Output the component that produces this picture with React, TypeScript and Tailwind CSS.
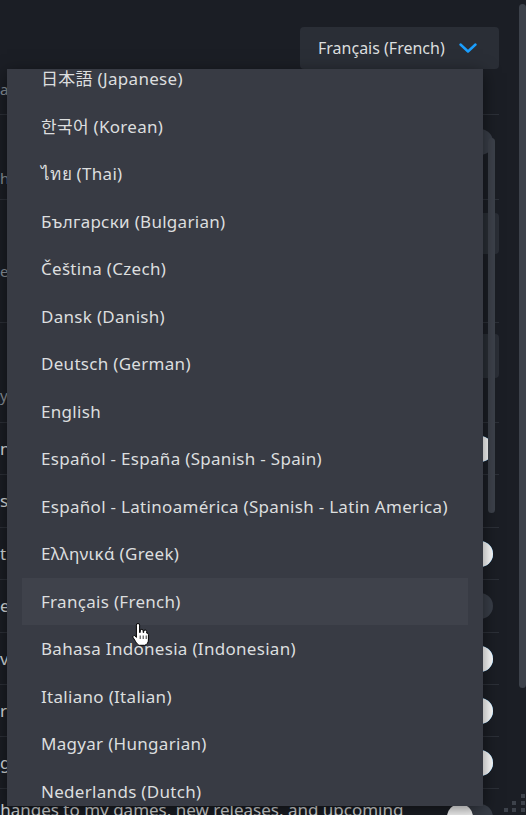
import React from "react";

const FONT = '"Noto Sans", "Noto Sans CJK JP", "Noto Sans CJK KR", "DejaVu Sans", sans-serif';

const languages = [
  "日本語 (Japanese)",
  "한국어 (Korean)",
  "ไทย (Thai)",
  "Български (Bulgarian)",
  "Čeština (Czech)",
  "Dansk (Danish)",
  "Deutsch (German)",
  "English",
  "Español - España (Spanish - Spain)",
  "Español - Latinoamérica (Spanish - Latin America)",
  "Ελληνικά (Greek)",
  "Français (French)",
  "Bahasa Indonesia (Indonesian)",
  "Italiano (Italian)",
  "Magyar (Hungarian)",
  "Nederlands (Dutch)",
];

function Toggle({ on }: { on: boolean }) {
  return (
    <div
      className={
        "relative w-[46px] h-[26px] rounded-full " + (on ? "bg-[#1a9fff]" : "bg-[#393e48]")
      }
    >
      <div
        className={
          "absolute top-0 w-[26px] h-[26px] rounded-full bg-white " + (on ? "right-0" : "left-0")
        }
      />
    </div>
  );
}

function ToggleRow({ h, label, on }: { h: string; label: string; on: boolean }) {
  return (
    <div className={"shrink-0 flex items-center justify-between border-b border-[#2c3038] pr-[6px] " + h}>
      <span className="text-[17px] text-[#dcdedf] whitespace-nowrap">{label}</span>
      <Toggle on={on} />
    </div>
  );
}

function Chevron() {
  return (
    <svg width="18" height="10" viewBox="0 0 18 10" fill="none">
      <path d="M1.5 1.5 L9 8.5 L16.5 1.5" stroke="#1a9fff" strokeWidth="2.4" strokeLinecap="round" strokeLinejoin="round" />
    </svg>
  );
}

function Cursor() {
  return (
    <svg width="18" height="25" viewBox="0 0 18 25">
      <path
        d="M6 1.5a1.6 1.6 0 0 1 1.6 1.6v7.4h0.6v-1.6a1.5 1.5 0 0 1 3 0v1.6h0.5v-1a1.5 1.5 0 0 1 3 0v1.6h0.3a1.4 1.4 0 0 1 1.4 1.4v5.5c0 2.6-1.5 4.6-3.6 5.3h-5.6c-1.5-0.6-2.6-2.1-3.5-3.6l-2.6-4.2a1.3 1.3 0 0 1 2-1.6l1.3 1.5v-12.3a1.6 1.6 0 0 1 1.6-1.6z"
        fill="white"
        stroke="black"
        strokeWidth="1"
        strokeLinejoin="round"
      />
      <path d="M8.2 13.5v3.5M11.2 13.5v3.5M14.2 13.5v3.5" stroke="black" strokeWidth="0.8" />
    </svg>
  );
}

export default function App() {
  return (
    <div
      className="relative w-[526px] h-[815px] overflow-hidden bg-[#1b1e25] flex"
      style={{ fontFamily: FONT }}
    >
      {/* settings page */}
      <div className="w-[499px] flex flex-col shrink-0">
        <div className="shrink-0 h-[115px] border-b border-[#2c3038] flex flex-col">
          <div className="flex justify-end pt-[27px]">
            <div className="w-[199px] h-[42px] rounded-[4px] bg-[#2a2e36] flex items-center justify-between pl-[18px] pr-[22px]">
              <span className="text-[16px] text-[#dcdedf] whitespace-nowrap">Français (French)</span>
              <Chevron />
            </div>
          </div>
          <span className="mt-[9px] text-[15px] text-[#8b929a] whitespace-nowrap">all text</span>
        </div>
        <div className="shrink-0 h-[85px] border-b border-[#2c3038] flex justify-between pr-[6px]">
          <div className="flex flex-col pt-[12px]">
            <span className="text-[17px] text-[#dcdedf]">&nbsp;</span>
            <span className="mt-[14px] text-[15px] text-[#8b929a] whitespace-nowrap">hide</span>
          </div>
          <div className="pt-[14px]">
            <Toggle on={false} />
          </div>
        </div>
        <div className="shrink-0 h-[123px] border-b border-[#2c3038] flex justify-between">
          <div className="flex flex-col pt-[60px]">
            <span className="text-[15px] text-[#8b929a] whitespace-nowrap">eek</span>
          </div>
          <div className="pt-[13px]">
            <div className="w-[199px] h-[41px] rounded-[4px] bg-[#2a2e36]" />
          </div>
        </div>
        <div className="shrink-0 h-[100px] border-b border-[#2c3038] flex justify-between">
          <div className="flex flex-col pt-[61px]">
            <span className="text-[15px] text-[#8b929a] whitespace-nowrap">y</span>
          </div>
          <div className="pt-[11px]">
            <div className="w-[199px] h-[44px] rounded-[4px] bg-[#2a2e36]" />
          </div>
        </div>
        <ToggleRow h="h-[52px]" label="n" on={true} />
        <div className="shrink-0 h-[53px] border-b border-[#2c3038] flex items-center">
          <span className="text-[17px] text-[#dcdedf] whitespace-nowrap">s</span>
        </div>
        <ToggleRow h="h-[52px]" label="t" on={true} />
        <ToggleRow h="h-[53px]" label="e" on={false} />
        <ToggleRow h="h-[52px]" label="v" on={true} />
        <ToggleRow h="h-[52px]" label="r" on={true} />
        <ToggleRow h="h-[52px]" label="g" on={true} />
        <div className="shrink-0 flex justify-between items-start pt-[8px] pr-[6px]">
          <span className="-ml-[8px] text-[17px] text-[#dcdedf] whitespace-nowrap">
            changes to my games, new releases, and upcoming
          </span>
          <div className="mt-[7px]">
            <Toggle on={false} />
          </div>
        </div>
      </div>

      {/* page scrollbar */}
      <div className="flex-1 flex justify-end pt-[4px]">
        <div className="w-[7px] h-[684px] rounded-full bg-[#3d424b]" />
      </div>

      {/* inner scroll indicator */}
      <div className="absolute left-[488px] top-[138px] w-[7px] h-[375px] rounded-full bg-[#3d424b]" />

      {/* resize grip */}
      <div className="absolute right-0 bottom-[3px] grid grid-cols-3 gap-[3px] w-[22px]">
        <span />
        <span />
        <span className="w-[4px] h-[4px] bg-[#3d424b]" />
        <span />
        <span className="w-[4px] h-[4px] bg-[#3d424b]" />
        <span className="w-[4px] h-[4px] bg-[#3d424b]" />
        <span className="w-[4px] h-[4px] bg-[#3d424b]" />
        <span className="w-[4px] h-[4px] bg-[#3d424b]" />
        <span className="w-[4px] h-[4px] bg-[#3d424b]" />
      </div>

      {/* dropdown menu */}
      <div className="absolute left-[7px] top-[69px] w-[476px] h-[737px] overflow-hidden bg-[#383b44] shadow-[0_4px_16px_rgba(0,0,0,0.5)]">
        <div className="-mt-[14px] flex flex-col">
          {languages.map((l) => (
            <div
              key={l}
              className={
                "shrink-0 mx-[15px] h-[47.5px] px-[19px] flex items-center text-[17px] tracking-[0.3px] text-[#dcdedf] whitespace-nowrap " +
                (l === "Français (French)" ? "bg-[#3f424b]" : "")
              }
            >
              {l}
            </div>
          ))}
        </div>
      </div>

      {/* mouse cursor */}
      <div className="absolute left-[132px] top-[622px]">
        <Cursor />
      </div>
    </div>
  );
}
